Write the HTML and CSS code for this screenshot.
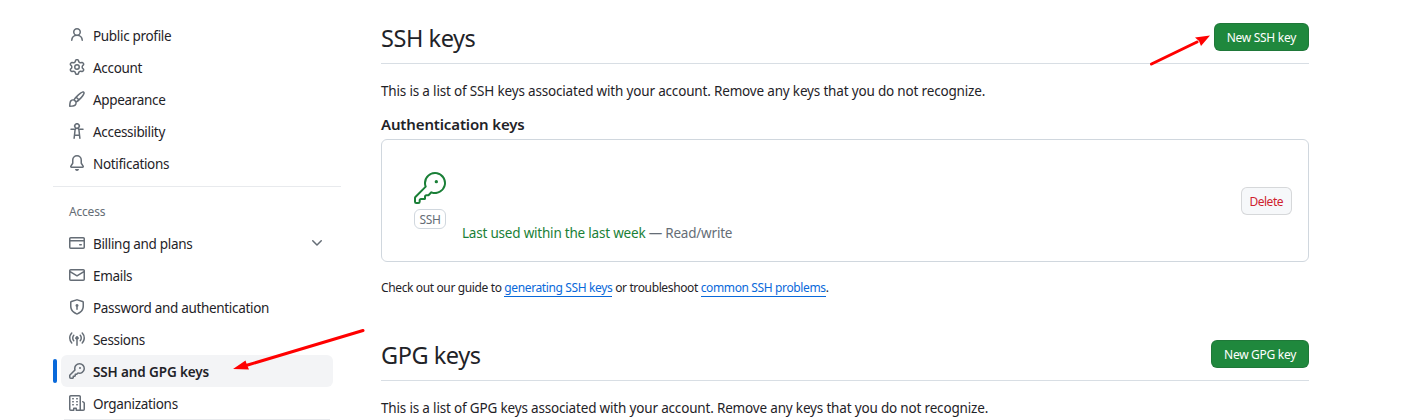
FILE: index.html
```
<!DOCTYPE html>
<html lang="en">
<head>
<meta charset="utf-8">
<title>SSH and GPG keys</title>
<link rel="stylesheet" href="styles.css">
</head>
<body>
<div class="layout">
  <nav class="sidebar">
    <ul class="nav-list">
      <li class="nav-item"><svg class="icon" viewBox="0 0 16 16"><path d="M10.561 8.073a6.005 6.005 0 0 1 3.432 5.142.75.75 0 1 1-1.498.07 4.5 4.5 0 0 0-8.99 0 .75.75 0 0 1-1.498-.07 6.004 6.004 0 0 1 3.431-5.142 3.999 3.999 0 1 1 5.123 0ZM10.5 5a2.5 2.5 0 1 0-5 0 2.5 2.5 0 0 0 5 0Z"/></svg><span class="nav-label">Public profile</span></li>
      <li class="nav-item"><svg class="icon" viewBox="0 0 16 16"><path d="M8 0a8.2 8.2 0 0 1 .701.031C9.444.095 9.99.645 10.16 1.29l.288 1.107c.018.066.079.158.212.224.231.114.454.243.668.386.123.082.233.09.299.071l1.103-.303c.644-.176 1.392.021 1.82.63.27.385.506.792.704 1.218.315.675.111 1.422-.364 1.891l-.814.806c-.049.048-.098.147-.088.294.016.257.016.515 0 .772-.01.147.038.246.088.294l.814.806c.475.469.679 1.216.364 1.891a7.977 7.977 0 0 1-.704 1.217c-.428.61-1.176.807-1.82.63l-1.102-.302c-.067-.019-.177-.011-.3.071a5.909 5.909 0 0 1-.668.386c-.133.066-.194.158-.211.224l-.29 1.106c-.168.646-.715 1.196-1.458 1.26a8.006 8.006 0 0 1-1.402 0c-.743-.064-1.289-.614-1.458-1.26l-.289-1.106c-.018-.066-.079-.158-.212-.224a5.738 5.738 0 0 1-.668-.386c-.123-.082-.233-.09-.299-.071l-1.103.303c-.644.176-1.392-.021-1.82-.63a8.12 8.12 0 0 1-.704-1.218c-.315-.675-.111-1.422.363-1.891l.815-.806c.05-.048.098-.147.088-.294a6.214 6.214 0 0 1 0-.772c.01-.147-.038-.246-.088-.294l-.815-.806C.635 6.045.431 5.298.746 4.623a7.92 7.92 0 0 1 .704-1.217c.428-.61 1.176-.807 1.82-.63l1.102.302c.067.019.177.011.3-.071.214-.143.437-.272.668-.386.133-.066.194-.158.211-.224l.29-1.106C6.009.645 6.556.095 7.299.03 7.53.01 7.764 0 8 0Zm-.571 1.525c-.036.003-.108.036-.137.146l-.289 1.105c-.147.561-.549.967-.998 1.189-.173.086-.34.183-.5.29-.417.278-.97.423-1.529.27l-1.103-.303c-.109-.03-.175.016-.195.045-.22.312-.412.644-.573.99-.014.031-.021.11.059.19l.815.806c.411.406.562.957.53 1.456a4.709 4.709 0 0 0 0 .582c.032.499-.119 1.05-.53 1.456l-.815.806c-.081.08-.073.159-.059.19.162.346.353.677.573.989.02.03.085.076.195.046l1.102-.303c.56-.153 1.113-.008 1.53.27.161.107.328.204.501.29.447.222.85.629.997 1.189l.289 1.105c.029.109.101.143.137.146a6.6 6.6 0 0 0 1.142 0c.036-.003.108-.036.137-.146l.289-1.105c.147-.561.549-.967.998-1.189.173-.086.34-.183.5-.29.417-.278.97-.423 1.529-.27l1.103.303c.109.029.175-.016.195-.045.22-.313.411-.644.573-.99.014-.031.021-.11-.059-.19l-.815-.806c-.411-.406-.562-.957-.53-1.456a4.709 4.709 0 0 0 0-.582c-.032-.499.119-1.05.53-1.456l.815-.806c.081-.08.073-.159.059-.19a6.464 6.464 0 0 0-.573-.989c-.02-.03-.085-.076-.195-.046l-1.102.303c-.56.153-1.113.008-1.53-.27a4.44 4.44 0 0 0-.501-.29c-.447-.222-.85-.629-.997-1.189l-.289-1.105c-.029-.11-.101-.143-.137-.146a6.6 6.6 0 0 0-1.142 0ZM11 8a3 3 0 1 1-6 0 3 3 0 0 1 6 0ZM9.5 8a1.5 1.5 0 1 0-3.001.001A1.5 1.5 0 0 0 9.5 8Z"/></svg><span class="nav-label">Account</span></li>
      <li class="nav-item"><svg class="icon" viewBox="0 0 16 16"><path d="M11.134 1.535c.7-.509 1.416-.942 2.076-1.155.649-.21 1.463-.267 2.069.34.603.601.568 1.411.368 2.07-.202.668-.624 1.39-1.125 2.096-1.011 1.424-2.496 2.987-3.775 4.249-1.098 1.084-2.132 1.839-3.04 2.3a3.744 3.744 0 0 1-1.055 3.217c-.431.431-1.065.691-1.657.861-.614.177-1.294.287-1.914.357A21.151 21.151 0 0 1 .797 16H.743l.007-.75H.749L.742 16a.75.75 0 0 1-.743-.742l.743-.008-.742.007v-.054a21.25 21.25 0 0 1 .13-2.284c.067-.647.187-1.287.358-1.914.17-.591.43-1.226.86-1.657a3.746 3.746 0 0 1 3.227-1.054c.466-.893 1.225-1.907 2.314-2.982 1.271-1.255 2.833-2.75 4.246-3.777ZM1.62 13.089c-.051.464-.086.929-.104 1.395.466-.018.932-.053 1.396-.104a10.511 10.511 0 0 0 1.668-.309c.526-.151.856-.325 1.011-.48a2.25 2.25 0 1 0-3.182-3.182c-.155.155-.329.485-.48 1.01a10.515 10.515 0 0 0-.309 1.67Zm10.396-10.34c-1.224.89-2.605 2.189-3.822 3.384l1.718 1.718c1.21-1.205 2.51-2.597 3.387-3.833.47-.662.78-1.227.912-1.662.134-.444.032-.551.009-.575h-.001V1.78c-.014-.014-.113-.113-.548.027-.432.14-.995.462-1.655.942Zm-4.832 7.266-.001.001a9.859 9.859 0 0 0 1.63-1.142L7.155 7.216a9.7 9.7 0 0 0-1.161 1.607c.482.302.889.71 1.19 1.192Z"/></svg><span class="nav-label">Appearance</span></li>
      <li class="nav-item"><svg class="icon" viewBox="0 0 16 16"><path d="M9.923 5.302c.063.063.122.129.178.198H14A.75.75 0 0 1 14 7h-3.3l.578 5.163.362 2.997a.75.75 0 0 1-1.49.18L9.868 13H6.132l-.282 2.34a.75.75 0 0 1-1.49-.18l.362-2.997L5.3 7H2a.75.75 0 0 1 0-1.5h3.9a2.54 2.54 0 0 1 .176-.198 3 3 0 1 1 3.847 0ZM9.2 7.073h-.001a1.206 1.206 0 0 0-2.398 0L6.305 11.5h3.39ZM9.5 3a1.5 1.5 0 1 0-3.001.001A1.5 1.5 0 0 0 9.5 3Z"/></svg><span class="nav-label">Accessibility</span></li>
      <li class="nav-item"><svg class="icon" viewBox="0 0 16 16"><path d="M8 16a2 2 0 0 0 1.985-1.75c.017-.137-.097-.25-.235-.25h-3.5c-.138 0-.252.113-.235.25A2 2 0 0 0 8 16ZM3 5a5 5 0 0 1 10 0v2.947c0 .05.015.098.042.139l1.703 2.555A1.519 1.519 0 0 1 13.482 13H2.518a1.516 1.516 0 0 1-1.263-2.36l1.703-2.554A.255.255 0 0 0 3 7.947Zm5-3.5A3.5 3.5 0 0 0 4.5 5v2.947c0 .346-.102.683-.294.97l-1.703 2.556a.017.017 0 0 0-.003.01l.001.006c0 .002.002.004.004.006l.006.004.007.001h10.964l.007-.001.006-.004.004-.006.001-.007a.017.017 0 0 0-.003-.01l-1.703-2.554a1.745 1.745 0 0 1-.294-.97V5A3.5 3.5 0 0 0 8 1.5Z"/></svg><span class="nav-label">Notifications</span></li>
    </ul>
    <hr class="nav-divider">
    <h3 class="nav-heading">Access</h3>
    <ul class="nav-list">
      <li class="nav-item"><svg class="icon" viewBox="0 0 16 16"><path d="M10.75 9a.75.75 0 0 0 0 1.5h1.5a.75.75 0 0 0 0-1.5h-1.5Z"/><path d="M0 3.75C0 2.784.784 2 1.75 2h12.5c.966 0 1.75.784 1.75 1.75v8.5A1.75 1.75 0 0 1 14.25 14H1.75A1.75 1.75 0 0 1 0 12.25ZM14.5 6.5h-13v5.75c0 .138.112.25.25.25h12.5a.25.25 0 0 0 .25-.25Zm0-2.75a.25.25 0 0 0-.25-.25H1.75a.25.25 0 0 0-.25.25V5h13Z"/></svg><span class="nav-label">Billing and plans</span><svg class="icon" viewBox="0 0 16 16"><path d="M12.78 5.22a.749.749 0 0 1 0 1.06l-4.25 4.25a.749.749 0 0 1-1.06 0L3.22 6.28a.749.749 0 1 1 1.06-1.06L8 8.939l3.72-3.719a.749.749 0 0 1 1.06 0Z"/></svg></li>
      <li class="nav-item"><svg class="icon" viewBox="0 0 16 16"><path d="M1.75 2h12.5c.966 0 1.75.784 1.75 1.75v8.5A1.75 1.75 0 0 1 14.25 14H1.75A1.75 1.75 0 0 1 0 12.25v-8.5C0 2.784.784 2 1.75 2ZM1.5 12.251c0 .138.112.25.25.25h12.5a.25.25 0 0 0 .25-.25V5.809L8.38 9.397a.75.75 0 0 1-.76 0L1.5 5.809v6.442Zm13-8.181v-.32a.25.25 0 0 0-.25-.25H1.75a.25.25 0 0 0-.25.25v.32L8 7.88Z"/></svg><span class="nav-label">Emails</span></li>
      <li class="nav-item"><svg class="icon" viewBox="0 0 16 16"><path d="m8.533.133 5.25 1.68A1.75 1.75 0 0 1 15 3.48V7c0 1.566-.32 3.182-1.303 4.682-.983 1.498-2.585 2.813-5.032 3.855a1.697 1.697 0 0 1-1.33 0c-2.447-1.042-4.049-2.357-5.032-3.855C1.32 10.182 1 8.566 1 7V3.48a1.75 1.75 0 0 1 1.217-1.667l5.25-1.68a1.748 1.748 0 0 1 1.066 0Zm-.61 1.429.001.001-5.25 1.68a.251.251 0 0 0-.174.237V7c0 1.36.275 2.666 1.057 3.859.784 1.194 2.121 2.342 4.366 3.298a.196.196 0 0 0 .154 0c2.245-.957 3.582-2.103 4.366-3.297C13.225 9.666 13.5 8.358 13.5 7V3.48a.25.25 0 0 0-.174-.238l-5.25-1.68a.25.25 0 0 0-.153 0ZM9.5 6.5c0 .536-.286 1.032-.75 1.3v2.45a.75.75 0 0 1-1.5 0V7.8A1.5 1.5 0 1 1 9.5 6.5Z"/></svg><span class="nav-label">Password and authentication</span></li>
      <li class="nav-item"><svg class="icon" viewBox="0 0 16 16"><path d="M8.75 8.582v5.668a.75.75 0 0 1-1.5 0V8.582a1.75 1.75 0 1 1 1.5 0Zm3.983-7.125a.75.75 0 0 1 1.06.026A7.976 7.976 0 0 1 16 7c0 2.139-.84 4.083-2.207 5.517a.75.75 0 1 1-1.086-1.034A6.474 6.474 0 0 0 14.5 7a6.474 6.474 0 0 0-1.793-4.483.75.75 0 0 1 .026-1.06Zm-9.466 0c.3.286.312.76.026 1.06A6.474 6.474 0 0 0 1.5 7a6.47 6.47 0 0 0 1.793 4.483.75.75 0 0 1-1.086 1.034A7.973 7.973 0 0 1 0 7c0-2.139.84-4.083 2.207-5.517a.75.75 0 0 1 1.06-.026Zm8.556 2.321A4.988 4.988 0 0 1 13 7a4.988 4.988 0 0 1-1.177 3.222.75.75 0 1 1-1.146-.967A3.487 3.487 0 0 0 11.5 7c0-.86-.309-1.645-.823-2.255a.75.75 0 0 1 1.146-.967Zm-6.492.958A3.48 3.48 0 0 0 4.5 7a3.48 3.48 0 0 0 .823 2.255.75.75 0 0 1-1.146.967A4.981 4.981 0 0 1 3 7a4.982 4.982 0 0 1 1.188-3.236.75.75 0 1 1 1.143.972Z"/></svg><span class="nav-label">Sessions</span></li>
      <li class="nav-item nav-item-current"><svg class="icon" viewBox="0 0 16 16"><path d="M10.5 0a5.499 5.499 0 1 1-1.288 10.848l-.932.932a.749.749 0 0 1-.53.22H7v.75a.749.749 0 0 1-.22.53l-.5.5a.749.749 0 0 1-.53.22H5v.75a.749.749 0 0 1-.22.53l-.5.5a.749.749 0 0 1-.53.22h-2A1.75 1.75 0 0 1 0 14.25v-2c0-.199.079-.389.22-.53l4.932-4.932A5.5 5.5 0 0 1 10.5 0Zm-4 5.5c-.001.431.069.86.205 1.269a.75.75 0 0 1-.181.768L1.5 12.56v1.69c0 .138.112.25.25.25h1.69l.06-.06v-1.19a.75.75 0 0 1 .75-.75h1.19l.06-.06v-1.19a.75.75 0 0 1 .75-.75h1.19l1.023-1.025a.75.75 0 0 1 .768-.18A4 4 0 1 0 6.5 5.5ZM11 6a1 1 0 1 1 0-2 1 1 0 0 1 0 2Z"/></svg><span class="nav-label">SSH and GPG keys</span></li>
      <li class="nav-item"><svg class="icon" viewBox="0 0 16 16"><path d="M1.75 16A1.75 1.75 0 0 1 0 14.25V1.75C0 .784.784 0 1.75 0h8.5C11.216 0 12 .784 12 1.75v12.5c0 .085-.006.168-.018.25h2.268a.25.25 0 0 0 .25-.25V8.285a.25.25 0 0 0-.111-.208l-1.055-.703a.749.749 0 1 1 .832-1.248l1.055.703c.487.325.779.871.779 1.456v5.965A1.75 1.75 0 0 1 14.25 16h-3.5a.766.766 0 0 1-.197-.026c-.099.017-.2.026-.303.026h-3a.75.75 0 0 1-.75-.75V14h-1v1.25a.75.75 0 0 1-.75.75Zm-.25-1.75c0 .138.112.25.25.25H4v-1.25a.75.75 0 0 1 .75-.75h2.5a.75.75 0 0 1 .75.75v1.25h2.25a.25.25 0 0 0 .25-.25V1.75a.25.25 0 0 0-.25-.25h-8.5a.25.25 0 0 0-.25.25ZM3.75 6h.5a.75.75 0 0 1 0 1.5h-.5a.75.75 0 0 1 0-1.5ZM3 3.75A.75.75 0 0 1 3.75 3h.5a.75.75 0 0 1 0 1.5h-.5A.75.75 0 0 1 3 3.75Zm4 3A.75.75 0 0 1 7.75 6h.5a.75.75 0 0 1 0 1.5h-.5A.75.75 0 0 1 7 6.75ZM7.75 3h.5a.75.75 0 0 1 0 1.5h-.5a.75.75 0 0 1 0-1.5ZM3 9.75A.75.75 0 0 1 3.75 9h.5a.75.75 0 0 1 0 1.5h-.5A.75.75 0 0 1 3 9.75ZM7.75 9h.5a.75.75 0 0 1 0 1.5h-.5a.75.75 0 0 1 0-1.5Z"/></svg><span class="nav-label">Organizations</span></li>
    </ul>
    <div class="nav-edge"></div>
  </nav>
  <main class="content">
    <header class="subhead">
      <h2 class="subhead-title">SSH keys</h2>
      <button class="btn btn-primary">New SSH key</button>
    </header>
    <p class="intro">This is a list of SSH keys associated with your account. Remove any keys that you do not recognize.</p>
    <h3 class="list-title">Authentication keys</h3>
    <section class="key-box">
      <div class="key-kind">
        <svg class="key-icon" viewBox="0 0 24 24"><path d="M16.75 8.5a1.25 1.25 0 1 0 0-2.5 1.25 1.25 0 0 0 0 2.5Z"/><path d="M15.75 0a8.25 8.25 0 1 1-2.541 16.101l-1.636 1.636a1.744 1.744 0 0 1-1.237.513H9.25a.25.25 0 0 0-.25.25v1.448a.876.876 0 0 1-.256.619l-.214.213a.75.75 0 0 1-.545.22H5.25a.25.25 0 0 0-.25.25v1A1.75 1.75 0 0 1 3.25 24h-1.5A1.75 1.75 0 0 1 0 22.25v-2.836c0-.464.185-.908.513-1.236l7.386-7.388A8.249 8.249 0 0 1 15.75 0ZM9 8.25a6.733 6.733 0 0 0 .463 2.462.75.75 0 0 1-.168.804l-7.722 7.721a.25.25 0 0 0-.073.177v2.836c0 .138.112.25.25.25h1.5a.25.25 0 0 0 .25-.25v-1c0-.966.784-1.75 1.75-1.75H7.5v-1c0-.966.784-1.75 1.75-1.75h1.086a.25.25 0 0 0 .177-.073l1.971-1.972a.75.75 0 0 1 .804-.168A6.75 6.75 0 1 0 9 8.25Z"/></svg>
        <span class="key-label">SSH</span>
      </div>
      <p class="key-usage"><span class="key-recent">Last used within the last week</span> — Read/write</p>
      <button class="btn btn-danger">Delete</button>
    </section>
    <p class="guide">Check out our guide to <a class="link">generating SSH keys</a> or troubleshoot <a class="link">common SSH problems</a>.</p>
    <header class="subhead subhead-gpg">
      <h2 class="subhead-title">GPG keys</h2>
      <button class="btn btn-primary">New GPG key</button>
    </header>
    <p class="intro">This is a list of GPG keys associated with your account. Remove any keys that you do not recognize.</p>
  </main>
</div>
<svg class="pointers" viewBox="0 0 1411 420">
  <path class="pointer-line" d="M1151.5 64 1197 42M363 330.500 246 365.500"/>
  <path class="pointer-head" d="M1210 35.500 1201 46 1199 41 1195 37.500ZM233 369 245.500 360.500 247 365 249 369.500Z"/>
</svg>
</body>
</html>
```
FILE: styles.css
```
* {
  box-sizing: border-box;
}

body {
  margin: 0;
  height: 420px;
  overflow: hidden;
  background: #fff;
  color: #1f2328;
  font: 13.5px/21px "Noto Sans", "Open Sans", sans-serif;
}

h2, h3, p, ul {
  margin: 0;
  padding: 0;
}

.layout {
  display: grid;
  grid-template-columns: 288px 928px;
  column-gap: 40px;
  padding-left: 53px;
}

.sidebar {
  padding-top: 19px;
}

.nav-list {
  list-style: none;
  padding: 0 8px;
}

.nav-item {
  display: flex;
  align-items: center;
  gap: 8px;
  height: 32px;
  padding: 0 8px;
  border-radius: 6px;
}

.nav-label {
  flex: 1;
  padding-top: 2px;
  letter-spacing: -0.32px;
  line-height: 20px;
}

.nav-item-current {
  position: relative;
  background: #f3f4f6;
  font-weight: 600;
}

.nav-item-current .nav-label {
  letter-spacing: -0.12px;
}

.nav-item-current::before {
  content: "";
  position: absolute;
  left: -8px;
  top: 4px;
  width: 4px;
  height: 24px;
  border-radius: 6px;
  background: #0969da;
}

.icon {
  width: 16px;
  height: 16px;
  fill: #656d76;
}

.nav-divider {
  height: 1px;
  margin: 7px 0 16px;
  border: 0;
  background: #e8eaed;
}

.nav-heading {
  height: 24px;
  padding-left: 16px;
  color: #656d76;
  font-size: 12px;
  font-weight: 400;
  letter-spacing: -0.2px;
  line-height: 18px;
}

.nav-edge {
  height: 1px;
  margin: 0 11px;
  background: #e8eaed;
}

.subhead {
  display: flex;
  justify-content: space-between;
  height: 41px;
  margin-top: 23px;
  border-bottom: 1px solid #d8dee4;
}

.subhead-title {
  font-size: 23.5px;
  font-weight: 400;
  letter-spacing: -0.45px;
  line-height: 31px;
}

.btn {
  height: 28px;
  padding: 2px 12px 0;
  border: 1px solid rgba(31, 35, 40, 0.15);
  border-radius: 6px;
  font: 400 12px/20px "Noto Sans", "Open Sans", sans-serif;
  letter-spacing: -0.29px;
}

.btn-primary {
  background: #1f883d;
  color: #fff;
}

.intro {
  margin-top: 17px;
  letter-spacing: -0.175px;
}

.list-title {
  margin-top: 10px;
  font-size: 15px;
  font-weight: 600;
  letter-spacing: -0.14px;
  line-height: 24px;
}

.key-box {
  display: flex;
  align-items: center;
  height: 123px;
  margin-top: 3px;
  padding: 0 16px 0 32px;
  border: 1px solid #d0d7de;
  border-radius: 6px;
}

.key-kind {
  display: flex;
  flex-direction: column;
  align-items: center;
  gap: 5px;
  width: 32px;
}

.key-icon {
  width: 32px;
  height: 32px;
  fill: #1a7f37;
}

.key-label {
  width: 32px;
  height: 20px;
  border: 1px solid #d0d7de;
  border-radius: 6px;
  color: #656d76;
  font-size: 12px;
  letter-spacing: -0.3px;
  line-height: 19px;
  text-align: center;
}

.key-usage {
  flex: 1;
  align-self: flex-end;
  margin: 0 0 17px 16px;
  color: #656d76;
  letter-spacing: -0.21px;
}

.key-recent {
  color: #1a7f37;
}

.btn-danger {
  padding: 2px 8px 0;
  background: #f6f8fa;
  color: #cf222e;
  letter-spacing: -0.5px;
}

.guide {
  margin-top: 17px;
  font-size: 12px;
  letter-spacing: -0.37px;
  line-height: 18px;
}

.link {
  border-bottom: 1px solid #0969da;
  color: #0969da;
}

.subhead-gpg {
  margin-top: 43px;
}

.pointers {
  position: absolute;
  left: 0;
  top: 0;
  width: 1411px;
  height: 420px;
}

.pointer-line {
  fill: none;
  stroke: #f00;
  stroke-width: 3;
  stroke-linecap: round;
}

.pointer-head {
  fill: #f00;
}
```
